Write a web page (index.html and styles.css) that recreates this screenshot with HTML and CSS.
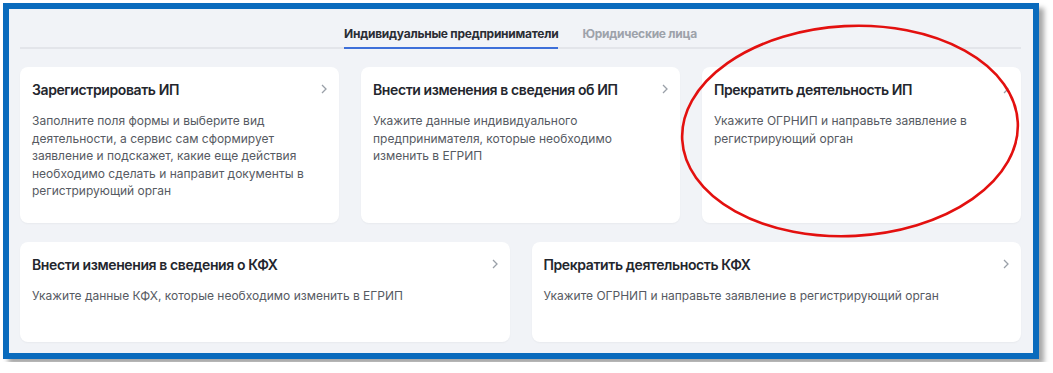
FILE: index.html
```html
<!DOCTYPE html>
<html lang="ru">
<head>
  <meta charset="UTF-8" />
  <title>Услуги для ИП и КФХ</title>
  <link rel="stylesheet" href="styles.css">
</head>
<body>
  <div class="frame">
    <div class="tabs">
      <div class="tab active">Индивидуальные предприниматели</div>
      <div class="tab">Юридические лица</div>
    </div>

    <div class="cards-row three">
      <div class="card">
        <div class="card-head">
          <span class="card-title">Зарегистрировать ИП</span>
          <svg class="chevron" width="6" height="10" viewBox="0 0 6 10"><path d="M1 1l4 4-4 4" /></svg>
        </div>
        <p class="card-text">Заполните поля формы и выберите вид деятельности, а сервис сам сформирует заявление и подскажет, какие еще действия необходимо сделать и направит документы в регистрирующий орган</p>
      </div>
      <div class="card">
        <div class="card-head">
          <span class="card-title">Внести изменения в сведения об ИП</span>
          <svg class="chevron" width="6" height="10" viewBox="0 0 6 10"><path d="M1 1l4 4-4 4" /></svg>
        </div>
        <p class="card-text">Укажите данные индивидуального предпринимателя, которые необходимо изменить в ЕГРИП</p>
      </div>
      <div class="card">
        <div class="card-head">
          <span class="card-title">Прекратить деятельность ИП</span>
          <svg class="chevron" width="6" height="10" viewBox="0 0 6 10"><path d="M1 1l4 4-4 4" /></svg>
        </div>
        <p class="card-text">Укажите ОГРНИП и направьте заявление в регистрирующий орган</p>
      </div>
    </div>

    <div class="cards-row two">
      <div class="card short">
        <div class="card-head">
          <span class="card-title">Внести изменения в сведения о КФХ</span>
          <svg class="chevron" width="6" height="10" viewBox="0 0 6 10"><path d="M1 1l4 4-4 4" /></svg>
        </div>
        <p class="card-text">Укажите данные КФХ, которые необходимо изменить в ЕГРИП</p>
      </div>
      <div class="card short">
        <div class="card-head">
          <span class="card-title">Прекратить деятельность КФХ</span>
          <svg class="chevron" width="6" height="10" viewBox="0 0 6 10"><path d="M1 1l4 4-4 4" /></svg>
        </div>
        <p class="card-text">Укажите ОГРНИП и направьте заявление в регистрирующий орган</p>
      </div>
    </div>

    <!-- пометка красным поверх карточки -->
    <svg class="mark" width="360" height="230" viewBox="0 0 360 230">
      <ellipse cx="180" cy="115" rx="168" ry="105" transform="rotate(-3 180 115)" />
    </svg>
  </div>
</body>
</html>
```

FILE: styles.css
```css
/* Базовые настройки */
body {
  margin: 0;
  padding: 3px;
  background: #fff;
  font-family: Inter, "Noto Sans", sans-serif;
  color: #23262d;
}

/* Рамка скриншота */
.frame {
  position: relative;
  width: 1036px;
  height: 356px;
  box-sizing: border-box;
  border: 6px solid #0a6bbd;
  background: #f1f3f7;
  padding: 0 12px 0 11px;
  box-shadow: 5px 5px 5px rgba(0, 0, 0, 0.35);
}

/* Вкладки */
.tabs {
  display: flex;
  justify-content: center;
  gap: 24px;
  padding-top: 17px;
  border-bottom: 2px solid #e3e5ea;
}

.tab {
  font-size: 12px;
  font-weight: 700;
  line-height: 16px;
  letter-spacing: -0.25px;
  padding-bottom: 5px;
  margin-bottom: -2px;
  color: #9da2aa;
  border-bottom: 2px solid transparent;
}

.tab.active {
  color: #2a2d34;
  border-bottom-color: #3d6fd9;
}

/* Ряды карточек */
.cards-row {
  display: grid;
  gap: 22px;
}

.cards-row.three {
  grid-template-columns: repeat(3, 1fr);
  margin-top: 18px;
}

.cards-row.two {
  grid-template-columns: repeat(2, 1fr);
  margin-top: 19px;
}

.card {
  background: #fff;
  border-radius: 8px;
  padding: 13px 12px;
  height: 156px;
  box-sizing: border-box;
  box-shadow: 0 1px 2px rgba(0, 0, 0, 0.04);
}

.card.short {
  height: 100px;
}

.card-head {
  display: flex;
  justify-content: space-between;
  align-items: center;
}

.card-title {
  font-size: 14px;
  font-weight: 600;
  line-height: 20px;
  letter-spacing: -0.4px;
  color: #23262d;
}

.chevron {
  fill: none;
  stroke: #9aa0a8;
  stroke-width: 1.3;
  margin-top: -3px;
}

.card-text {
  margin: 12px 0 0;
  padding-right: 14px;
  font-size: 12px;
  line-height: 17.5px;
  color: #565a62;
}

/* Красный овал поверх */
.mark {
  position: absolute;
  left: 661px;
  top: 7px;
  fill: none;
  stroke: #e3100f;
  stroke-width: 2.6;
}
```
